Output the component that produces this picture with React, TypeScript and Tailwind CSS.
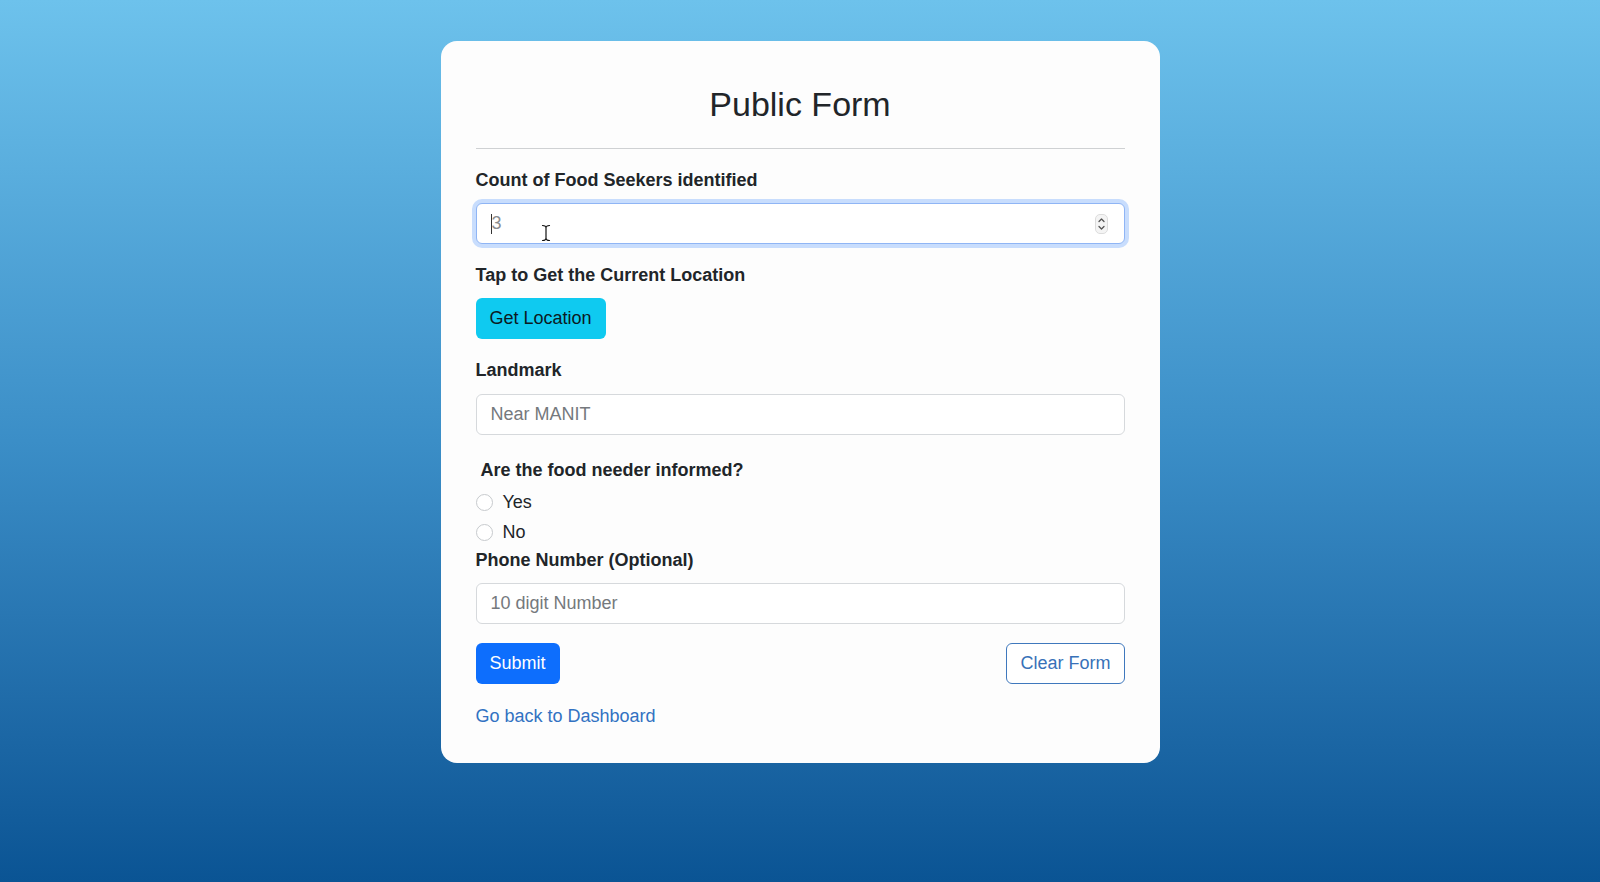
import * as React from "react";

const font = { fontFamily: '"Liberation Sans", Arial, sans-serif' };

const Label = ({ children, className = "" }: { children: React.ReactNode; className?: string }) => (
    <label className={`block text-[18px] leading-[26px] font-bold text-[#212529] ${className}`}>{children}</label>
);

const TextInput = ({ placeholder, className = "" }: { placeholder: string; className?: string }) => (
    <input
        type="text"
        placeholder={placeholder}
        className={`block w-full h-[41px] rounded-[6px] border border-[#d6d9dc] bg-white px-[14px] text-[18px] text-[#212529] placeholder:text-[#75797d] outline-none ${className}`}
    />
);

// radio tròn nhỏ như bootstrap
const Radio = ({ label }: { label: string }) => (
    <label className="flex items-center h-[30px] gap-[10px] text-[18px] text-[#212529]">
        <span className="w-[17px] h-[17px] rounded-full border border-[#c7cacd] bg-white"></span>
        {label}
    </label>
);

const Spinner = () => (
    <svg width="13" height="20" viewBox="0 0 13 20" className="text-[#555]">
        <rect x="0.5" y="0.5" width="12" height="19" rx="4.5" fill="#f4f4f4" stroke="#dcdcdc" />
        <path d="M4 7.5 L6.5 5 L9 7.5" fill="none" stroke="currentColor" strokeWidth="1.3" strokeLinecap="round" strokeLinejoin="round" />
        <path d="M4 12.5 L6.5 15 L9 12.5" fill="none" stroke="currentColor" strokeWidth="1.3" strokeLinecap="round" strokeLinejoin="round" />
    </svg>
);

// con trỏ chuột dạng I-beam
const IBeam = () => (
    <svg width="10" height="18" viewBox="0 0 10 18" className="absolute left-[64px] top-[20px]">
        <path d="M1.5 1.5 Q5 1.5 5 4 Q5 1.5 8.5 1.5 M5 4 V14 M1.5 16.5 Q5 16.5 5 14 Q5 16.5 8.5 16.5" fill="none" stroke="#fff" strokeWidth="3" strokeLinecap="round" />
        <path d="M1.5 1.5 Q5 1.5 5 4 Q5 1.5 8.5 1.5 M5 4 V14 M1.5 16.5 Q5 16.5 5 14 Q5 16.5 8.5 16.5" fill="none" stroke="#111" strokeWidth="1.2" strokeLinecap="round" />
    </svg>
);

export default function App() {
    return (
        <div
            className="min-h-[882px] w-full flex justify-center bg-gradient-to-b from-[#6dc2ec] via-[#3b8ec7] to-[#0a5494] pt-[41px]"
            style={font}
        >
            <div className="w-[719px] h-[722px] bg-[#fdfdfd] rounded-[16px] px-[35px] pt-[43px]">
                <h2 className="text-center text-[34px] leading-[41px] text-[#212529]">Public Form</h2>
                <hr className="mt-[23px] border-0 h-px bg-[#cfd1d3]" />

                <Label className="mt-[18px]">Count of Food Seekers identified</Label>
                <div className="mt-[10px] relative h-[41px] rounded-[6px] border border-[#8fb5f5] bg-white shadow-[0_0_0_4px_rgba(13,110,253,0.22)] flex items-center px-[14px]">
                    <span className="w-px h-[20px] bg-[#333]"></span>
                    <span className="text-[18px] text-[#8a8d90]">3</span>
                    <div className="ml-auto mr-[2px] flex items-center">
                        <Spinner />
                    </div>
                    <IBeam />
                </div>

                <Label className="mt-[18px]">Tap to Get the Current Location</Label>
                <button className="mt-[10px] h-[41px] px-[14px] rounded-[6px] bg-[#0fcaf0] text-[18px] text-[#0b1a22]">
                    Get Location
                </button>

                <Label className="mt-[18px]">Landmark</Label>
                <TextInput placeholder="Near MANIT" className="mt-[11px]" />

                <Label className="mt-[22px] pl-[5px]">Are the food needer informed?</Label>
                <div className="mt-[4px]">
                    <Radio label="Yes" />
                    <Radio label="No" />
                </div>

                <Label className="mt-[0px]">Phone Number (Optional)</Label>
                <TextInput placeholder="10 digit Number" className="mt-[10px]" />

                <div className="mt-[19px] flex justify-between">
                    <button className="h-[41px] px-[14px] rounded-[6px] bg-[#0d6efd] text-[18px] text-white">Submit</button>
                    <button className="h-[41px] px-[13px] rounded-[6px] border border-[#3f78bd] bg-white text-[18px] text-[#3871b8]">
                        Clear Form
                    </button>
                </div>

                <a href="#" className="mt-[19px] block w-fit text-[18px] leading-[26px] text-[#3272c2]">
                    Go back to Dashboard
                </a>
            </div>
        </div>
    );
}
